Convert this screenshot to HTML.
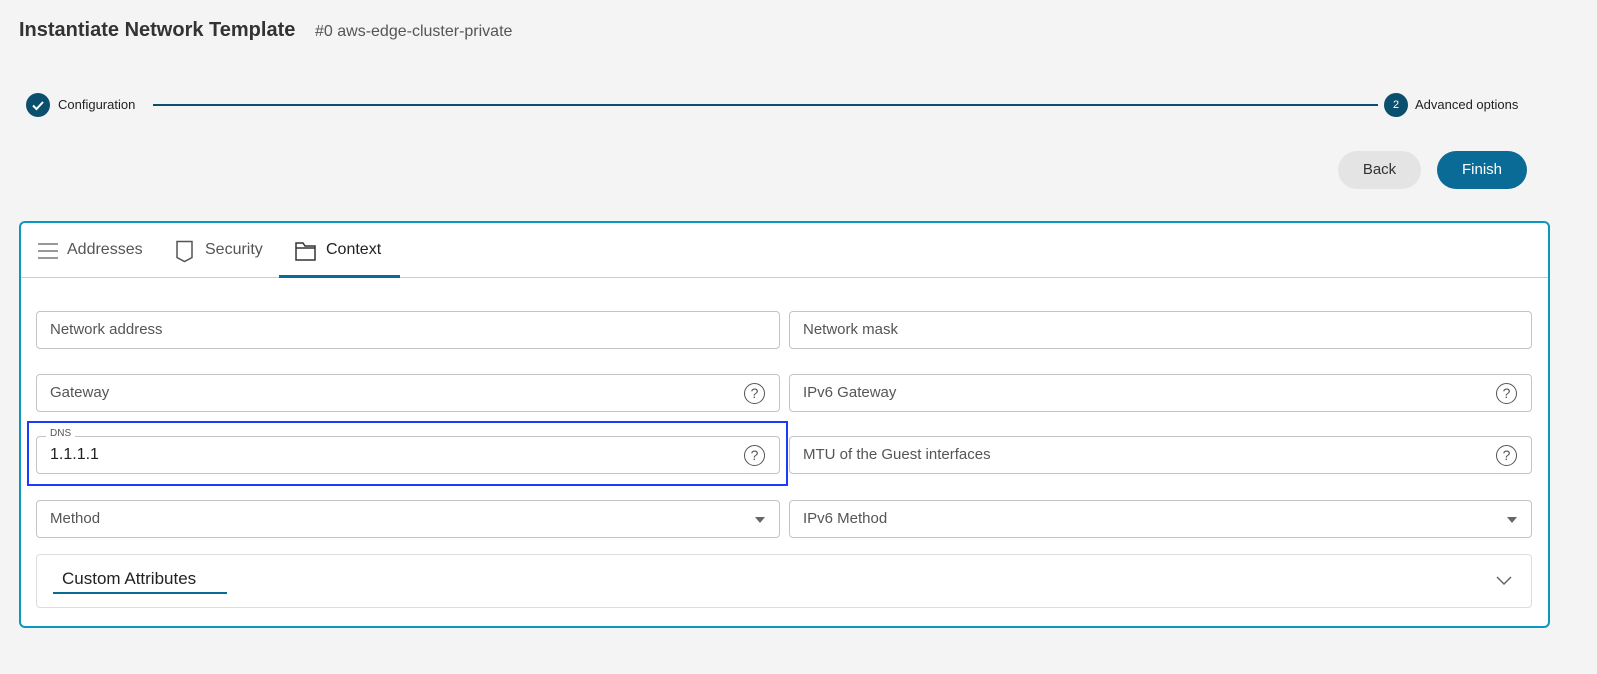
<!DOCTYPE html>
<html><head><style>
*{box-sizing:border-box;margin:0;padding:0}
body{width:1597px;height:674px;background:#f4f4f4;font-family:"Liberation Sans",sans-serif;position:relative;overflow:hidden;color:#222}
.abs{position:absolute}
.fld{position:absolute;height:38px;border:1px solid #c4c4c4;border-radius:4px;background:#fff;font-size:15px;color:#555;padding-left:13px;line-height:36px}
.q{position:absolute;right:14px;top:8px;width:21px;height:21px;border:1.5px solid #555;border-radius:50%;font-size:14px;line-height:18px;text-align:center;color:#555}
.caret{position:absolute;right:14px;top:16px;width:0;height:0;border-left:5px solid transparent;border-right:5px solid transparent;border-top:6px solid #666}
</style></head><body>
<div class="abs" style="left:19px;top:19px;font-size:20px;font-weight:bold;color:#333">Instantiate Network Template</div>
<div class="abs" style="left:315px;top:23px;font-size:16px;color:#555">#0 aws-edge-cluster-private</div>

<div class="abs" style="left:26px;top:93px;width:24px;height:24px;border-radius:50%;background:#0b4f6e">
<svg width="24" height="24"><path d="M7 12.5l3.5 3.5 6.5-7" stroke="#fff" stroke-width="2" fill="none"/></svg></div>
<div class="abs" style="left:58px;top:97px;font-size:13px;color:#222">Configuration</div>
<div class="abs" style="left:153px;top:104px;width:1225px;height:2px;background:#0b4f6e"></div>
<div class="abs" style="left:1384px;top:93px;width:24px;height:24px;border-radius:50%;background:#0b4f6e;color:#fff;font-size:11px;text-align:center;line-height:24px">2</div>
<div class="abs" style="left:1415px;top:97px;font-size:13px;color:#222">Advanced options</div>

<div class="abs" style="left:1338px;top:151px;width:83px;height:38px;border-radius:19px;background:#e4e4e4;font-size:15px;color:#333;text-align:center;line-height:38px">Back</div>
<div class="abs" style="left:1437px;top:151px;width:90px;height:38px;border-radius:19px;background:#0a6b96;font-size:15px;color:#fff;text-align:center;line-height:38px">Finish</div>

<div class="abs" style="left:19px;top:221px;width:1531px;height:407px;border:2px solid #0a98c0;border-radius:6px;background:#fff"></div>
<div class="abs" style="left:21px;top:277px;width:1527px;height:1px;background:#ccc"></div>
<div class="abs" style="left:279px;top:275px;width:121px;height:3px;background:#0a6b96"></div>
<svg class="abs" style="left:37px;top:241px" width="22" height="20"><path d="M1 3h20M1 10h20M1 17h20" stroke="#777" stroke-width="1.5"/></svg>
<div class="abs" style="left:67px;top:241px;font-size:16px;color:#555">Addresses</div>
<svg class="abs" style="left:175px;top:240px" width="20" height="24"><path d="M2 1.5h15v16l-7.5 4-7.5-4z" stroke="#555" stroke-width="1.5" fill="none"/></svg>
<div class="abs" style="left:205px;top:241px;font-size:16px;color:#555">Security</div>
<svg class="abs" style="left:295px;top:242px" width="22" height="19"><path d="M1 1h7l2 3h10v14H1z M1 6h19" stroke="#333" stroke-width="1.5" fill="none"/></svg>
<div class="abs" style="left:326px;top:241px;font-size:16px;color:#222">Context</div>

<div class="fld" style="left:36px;top:311px;width:744px">Network address</div>
<div class="fld" style="left:789px;top:311px;width:743px">Network mask</div>
<div class="fld" style="left:36px;top:374px;width:744px">Gateway<div class="q">?</div></div>
<div class="fld" style="left:789px;top:374px;width:743px">IPv6 Gateway<div class="q">?</div></div>
<div class="abs" style="left:27px;top:421px;width:761px;height:65px;border:2px solid #1a3cff"></div>
<div class="fld" style="left:36px;top:436px;width:744px;color:#222;font-size:16px">1.1.1.1<div class="q">?</div></div>
<div class="abs" style="left:46px;top:428px;padding:0 4px;background:#fff;font-size:10px;color:#555">DNS</div>
<div class="fld" style="left:789px;top:436px;width:743px">MTU of the Guest interfaces<div class="q">?</div></div>
<div class="fld" style="left:36px;top:500px;width:744px">Method<div class="caret"></div></div>
<div class="fld" style="left:789px;top:500px;width:743px">IPv6 Method<div class="caret"></div></div>

<div class="abs" style="left:36px;top:554px;width:1496px;height:54px;border:1px solid #ddd;border-radius:4px;background:#fff"></div>
<div class="abs" style="left:62px;top:569px;font-size:17px;color:#222">Custom Attributes</div>
<div class="abs" style="left:53px;top:592px;width:174px;height:2px;background:#0a6b96"></div>
<svg class="abs" style="left:1496px;top:576px" width="16" height="10"><path d="M1 1l7 7 7-7" stroke="#666" stroke-width="1.5" fill="none"/></svg>
</body></html>
